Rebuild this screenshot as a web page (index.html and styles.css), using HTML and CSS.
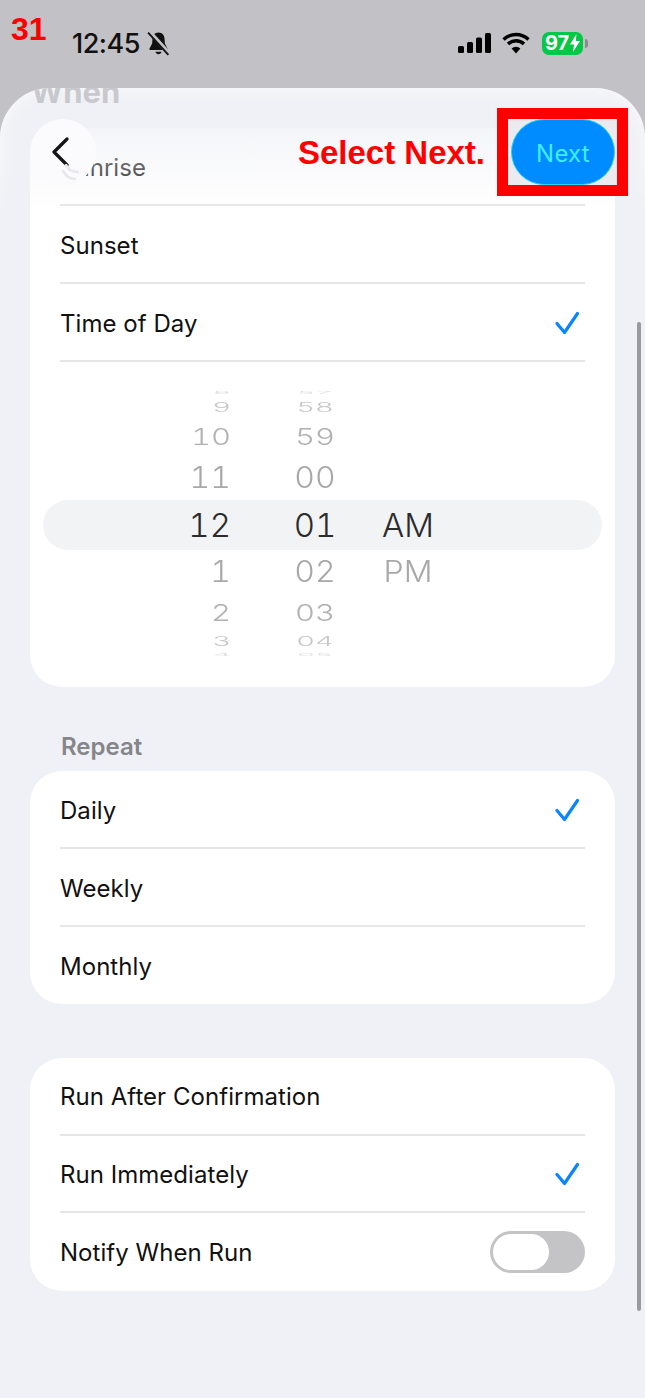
FILE: index.html
```html
<!DOCTYPE html>
<html lang="en">
<head>
  <meta charset="UTF-8">
  <meta name="viewport" content="width=device-width, initial-scale=1">
  <title>When</title>
  <link rel="stylesheet" href="styles.css">
</head>
<body>
  <div class="phone">
    <div class="step-number">31</div>

    <div class="status-bar">
      <div class="status-left">
        <span class="clock">12:45</span>
        <svg class="bell" viewBox="0 0 24 24" width="25" height="25">
          <path d="M12 1.500c-3.600 0-5.600 2.800-5.800 6l-.3 4.600L3.400 16.800c-.4.7.1 1.500.9 1.500h15.400c.8 0 1.300-.8.9-1.500l-2.500-4.700-.3-4.600c-.2-3.200-2.200-6-5.800-6zM9 19.800c.4 1.300 1.600 2.400 3 2.400s2.600-1.100 3-2.400z" fill="#111"/>
          <path d="M3.500 1l19 21" stroke="#c2c1c6" stroke-width="4"/>
          <path d="M2 1.500l19.500 21.500" stroke="#111" stroke-width="1.800"/>
        </svg>
      </div>
      <div class="status-right">
        <svg class="signal" viewBox="0 0 33 20" width="33" height="20">
          <rect x="0" y="13" width="6" height="7" rx="1.500" fill="#000"/>
          <rect x="9" y="9" width="6" height="11" rx="1.500" fill="#000"/>
          <rect x="18" y="4.500" width="6" height="15.500" rx="1.500" fill="#000"/>
          <rect x="27" y="0" width="6" height="20" rx="1.500" fill="#000"/>
        </svg>
        <svg class="wifi" viewBox="0 0 28 22" width="28" height="22">
          <path d="M1.500 7.500a18 18 0 0 1 25 0" fill="none" stroke="#000" stroke-width="3.400"/>
          <path d="M6 12a11.500 11.500 0 0 1 16 0" fill="none" stroke="#000" stroke-width="3.400"/>
          <path d="M14 21.500l-4.400-5a6.300 6.300 0 0 1 8.800 0z" fill="#000"/>
        </svg>
        <div class="battery">
          <span>97</span>
          <svg viewBox="0 0 10 18" width="10" height="18">
            <path d="M6.500 0L0 10.500h4L3 18l7-11H5.800z" fill="#fff"/>
          </svg>
        </div>
        <div class="battery-cap"></div>
      </div>
    </div>

    <div class="sheet">
      <h1 class="sheet-title">When</h1>

      <div class="card">
        <div class="row">Sunrise</div>
        <div class="row">Sunset</div>
        <div class="row">
          <span>Time of Day</span>
          <svg class="check" viewBox="0 0 24 24" width="24" height="24"><path d="M2 12.500l7.500 9L22.500 2.500"/></svg>
        </div>
        <div class="wheel">
          <div class="wheel-row edge"><span>8</span><span>57</span><span></span></div>
          <div class="wheel-row far"><span>9</span><span>58</span><span></span></div>
          <div class="wheel-row mid"><span>10</span><span>59</span><span></span></div>
          <div class="wheel-row near"><span>11</span><span>00</span><span></span></div>
          <div class="wheel-row current"><span>12</span><span>01</span><span>AM</span></div>
          <div class="wheel-row near lower"><span>1</span><span>02</span><span>PM</span></div>
          <div class="wheel-row mid lower"><span>2</span><span>03</span><span></span></div>
          <div class="wheel-row far lower"><span>3</span><span>04</span><span></span></div>
          <div class="wheel-row edge lower"><span>4</span><span>05</span><span></span></div>
        </div>
      </div>

      <div class="section-label">Repeat</div>
      <div class="card">
        <div class="row">
          <span>Daily</span>
          <svg class="check" viewBox="0 0 24 24" width="24" height="24"><path d="M2 12.500l7.500 9L22.500 2.500"/></svg>
        </div>
        <div class="row">Weekly</div>
        <div class="row">Monthly</div>
      </div>

      <div class="card card-last">
        <div class="row">Run After Confirmation</div>
        <div class="row">
          <span>Run Immediately</span>
          <svg class="check" viewBox="0 0 24 24" width="24" height="24"><path d="M2 12.500l7.500 9L22.500 2.500"/></svg>
        </div>
        <div class="row">
          <span>Notify When Run</span>
          <div class="toggle"><div class="knob"></div></div>
        </div>
      </div>

      <div class="top-fade"></div>
      <div class="edge-glow"></div>
      <div class="scrollbar"></div>
    </div>

    <div class="nav">
      <button class="back-btn">
        <svg viewBox="0 0 20 30" width="20" height="30"><path d="M17 2L4 15 17 28"/></svg>
        <svg class="smudge" viewBox="0 0 24 20" width="24" height="20"><path d="M10 2c3 5 5 7 12 7M7 8c3 5 7 8 12 8"/></svg>
      </button>
      <div class="nav-right">
        <span class="hint">Select Next.</span>
        <div class="red-box">
          <button class="next-btn">Next</button>
        </div>
      </div>
    </div>
  </div>
</body>
</html>
```

FILE: styles.css
```css
* {
  box-sizing: border-box;
}
body {
  margin: 0;
  font-family: 'Inter', 'Liberation Sans', sans-serif;
  color: #111;
  background: #c2c1c6;
}
.phone {
  position: relative;
  width: 645px;
  height: 1398px;
  overflow: hidden;
  background: #c2c1c6;
}
.step-number {
  position: absolute;
  left: 11px;
  top: 11px;
  font-family: 'Liberation Sans', Arial, sans-serif;
  font-size: 32px;
  font-weight: 700;
  line-height: 36px;
  color: #ff0000;
}

/* status bar */
.status-bar {
  height: 88px;
  padding: 29px 57px 0 72px;
  display: flex;
  justify-content: space-between;
  align-items: flex-start;
}
.status-left {
  display: flex;
  align-items: center;
  gap: 6px;
  height: 28px;
}
.clock {
  padding-top: 2px;
  font-size: 27px;
  font-weight: 500;
  line-height: 28px;
  letter-spacing: -0.5px;
}
.bell {
  display: block;
}
.status-right {
  display: flex;
  align-items: center;
  height: 28px;
}
.wifi {
  margin-left: 11px;
}
.battery {
  margin-left: 12px;
  width: 41px;
  height: 23px;
  background: #02c846;
  border-radius: 7px;
  display: flex;
  align-items: center;
  justify-content: center;
  gap: 1px;
  color: #fff;
  font-size: 20px;
  font-weight: 700;
}
.battery-cap {
  width: 3px;
  height: 9px;
  margin-left: 2px;
  background: #8c8c90;
  border-radius: 0 3px 3px 0;
}

/* sheet */
.sheet {
  position: relative;
  height: 1310px;
  padding: 40px 30px 0 30px;
  background: #f0f1f6;
  border-radius: 50px 50px 0 0;
  overflow: hidden;
}
.sheet-title {
  position: relative;
  z-index: 1;
  margin: -56px 0 16px 1px;
  font-size: 31px;
  font-weight: 700;
  line-height: 40px;
  color: #c9c9cd;
}
.card {
  background: #fff;
  border-radius: 32px;
}
.card-last {
  margin-top: 54px;
}
.row {
  height: 78px;
  margin: 0 30px 0 30px;
  padding-top: 2px;
  display: flex;
  justify-content: space-between;
  align-items: center;
  font-size: 24px;
  letter-spacing: 0.04px;
  border-bottom: 2px solid #e6e6e8;
}
.card > .row:last-child {
  height: 77px;
  border-bottom: none;
}
.card-last > .row {
  height: 77.5px;
}
.card-last > .row:last-child {
  height: 78px;
  padding-top: 0;
}
.check {
  margin-right: 6px;
}
.check path {
  fill: none;
  stroke: #0a84ff;
  stroke-width: 3.2;
  stroke-linecap: round;
  stroke-linejoin: round;
}
.section-label {
  height: 84px;
  padding: 46px 0 0 31px;
  font-size: 24px;
  font-weight: 600;
  line-height: 28px;
  color: #85858a;
}

/* time picker */
.wheel {
  padding: 27px 13px 29px 13px;
}
.wheel-row {
  display: grid;
  grid-template-columns: 229px 86px 100px;
  grid-template-rows: 100%;
  align-items: center;
  font-size: 33px;
  font-weight: 300;
  font-variant-numeric: tabular-nums;
}
.wheel-row span {
  display: block;
  text-align: center;
  line-height: 1;
}
.wheel-row span:first-child {
  text-align: right;
  padding-right: 41px;
}
.edge {
  height: 8px;
  color: #dcdcdc;
}
.edge span {
  transform: scaleY(0.14);
  font-size: 28px;
}
.edge.lower {
  height: 6px;
}
.far {
  height: 20px;
  color: #c8c8c8;
}
.far span {
  transform: scaleY(0.46);
  font-size: 29px;
}
.far.lower {
  height: 22px;
}
.mid {
  height: 38px;
  color: #b2b2b2;
}
.mid span {
  transform: scaleY(0.75);
  font-size: 31px;
}
.mid.lower {
  height: 36px;
}
.near {
  height: 45px;
  color: #a8a8a8;
}
.near span {
  transform: scaleY(0.92);
  font-size: 32px;
}
.near.lower {
  height: 44px;
}
.current {
  height: 50px;
  color: #2b2b2b;
  background: #f2f3f5;
  border-radius: 25px;
}

/* fog over the top of the list */
.top-fade {
  position: absolute;
  left: 0;
  right: 0;
  top: 0;
  height: 125px;
  background: linear-gradient(180deg, rgba(240, 241, 246, 0.95) 0%, rgba(240, 241, 246, 0.6) 40%, rgba(255, 255, 255, 0) 100%);
}
.edge-glow {
  position: absolute;
  left: 0;
  right: 0;
  top: 0;
  height: 130px;
  border-radius: 50px 50px 0 0;
  box-shadow: inset 0 0 14px 2px rgba(255, 255, 255, 0.6);
  -webkit-mask-image: linear-gradient(180deg, #000 55%, transparent 100%);
  mask-image: linear-gradient(180deg, #000 55%, transparent 100%);
}
.scrollbar {
  position: absolute;
  left: 637px;
  top: 234px;
  width: 4px;
  height: 989px;
  border-radius: 2px;
  background: #9a9a9e;
}

/* floating nav */
.nav {
  position: absolute;
  left: 30px;
  right: 17px;
  top: 108px;
  height: 88px;
  display: flex;
  justify-content: space-between;
  align-items: center;
}
.back-btn {
  position: relative;
  width: 66px;
  height: 66px;
  padding: 0;
  border: none;
  border-radius: 50%;
  background: #fbfbfd;
  display: flex;
  align-items: center;
  justify-content: center;
}
.back-btn svg {
  margin-right: 6px;
}
.back-btn path {
  fill: none;
  stroke: #151515;
  stroke-width: 3.2;
  stroke-linecap: round;
  stroke-linejoin: round;
}
.back-btn .smudge {
  position: absolute;
  left: 26px;
  top: 44px;
  margin: 0;
}
.back-btn .smudge path {
  stroke: #e8e8ec;
  stroke-width: 2.5;
}
.nav-right {
  display: flex;
  align-items: center;
  gap: 12px;
}
.hint {
  padding-top: 2px;
  font-family: 'Liberation Sans', Arial, sans-serif;
  font-size: 33px;
  font-weight: 700;
  color: #ff0000;
}
.red-box {
  width: 131px;
  height: 88px;
  border: 11px solid #ff0000;
  padding: 0 2px 0 3px;
  background: #ebebef;
}
.next-btn {
  width: 104px;
  height: 66px;
  padding: 2px 0 0 0;
  border: 1px solid #25d4f5;
  border-radius: 33px;
  background: #008cff;
  color: #3eeeff;
  font-family: 'Inter', 'Liberation Sans', sans-serif;
  font-size: 24px;
  font-weight: 400;
  letter-spacing: 0.2px;
}

/* switch */
.toggle {
  width: 95px;
  height: 42px;
  padding: 3px;
  border-radius: 21px;
  background: #c4c4c6;
}
.knob {
  width: 56px;
  height: 36px;
  border-radius: 18px;
  background: #fff;
}
```
